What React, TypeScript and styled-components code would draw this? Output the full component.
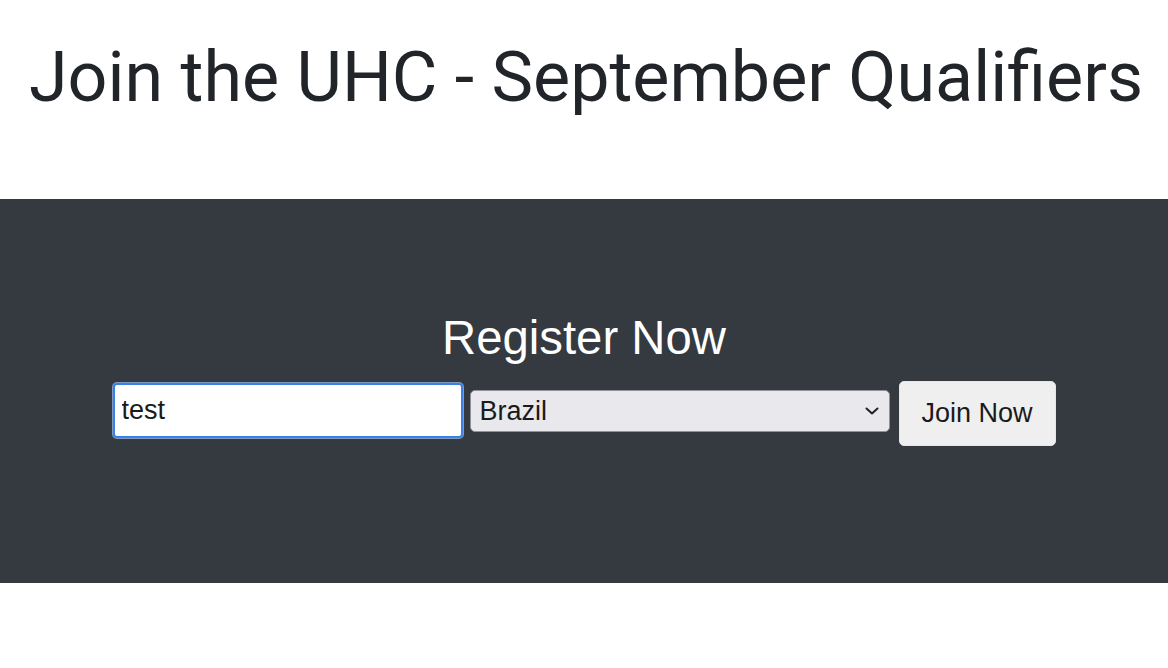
import React from "react";
import styled, { createGlobalStyle } from "styled-components";

const Global = createGlobalStyle`
  html, body { margin: 0; padding: 0; background: #fff; }
  body { font-family: Roboto, "Liberation Sans", Arial, sans-serif; color: #212529; }
`;

const Page = styled.div`
  display: flex;
  flex-direction: column;
  width: 100%;
`;

const Header = styled.header`
  height: 199px;
  display: flex;
  align-items: flex-start;
  justify-content: center;
`;

const Title = styled.h1`
  margin: 35px 0 0 4px;
  font-family: Roboto, sans-serif;
  font-weight: 400;
  font-size: 70px;
  line-height: 1.2;
  color: #212529;
  white-space: nowrap;
`;

const Band = styled.section`
  height: 384px;
  background: #343a40;
  display: flex;
  flex-direction: column;
  align-items: center;
  padding-top: 111px;
  box-sizing: border-box;
`;

const SubTitle = styled.h2`
  margin: 0;
  font-family: "Liberation Sans", Arial, sans-serif;
  font-weight: 400;
  font-size: 47.3px;
  line-height: 1.2;
  color: #fff;
`;

const Form = styled.form`
  display: flex;
  align-items: flex-start;
  margin-top: 14px;
`;

const TextInput = styled.input`
  box-sizing: border-box;
  width: 350px;
  height: 55px;
  margin-top: 2px;
  padding: 0 7px;
  font-family: "Liberation Sans", Arial, sans-serif;
  font-size: 27px;
  color: #1a1a1a;
  background: #fff;
  border: 2px solid #3a80e6;
  border-radius: 4px;
  box-shadow: 0 0 0 1px #7d9cc4;
  outline: none;
`;

const SelectWrap = styled.div`
  position: relative;
  margin: 9px 0 0 7px;
`;

const Select = styled.select`
  display: block;
  box-sizing: border-box;
  width: 420px;
  height: 42px;
  padding: 0 30px 0 9px;
  font-family: "Liberation Sans", Arial, sans-serif;
  font-size: 27px;
  color: #1a1a1a;
  background: #e9e9ed;
  border: 1px solid #8f8f9d;
  border-radius: 5px;
  appearance: none;
  -webkit-appearance: none;
  outline: none;
`;

const Chevron = styled.svg`
  position: absolute;
  right: 11px;
  top: 17px;
  width: 14px;
  height: 8px;
  pointer-events: none;
`;

const Button = styled.button`
  box-sizing: border-box;
  width: 157px;
  height: 65px;
  margin-left: 9px;
  padding: 0;
  font-family: "Liberation Sans", Arial, sans-serif;
  font-size: 27px;
  color: #1a1a1a;
  background: #efefef;
  border: 1px solid #e6e6e6;
  border-radius: 5px;
  cursor: pointer;
`;

export default function App() {
  return (
    <Page>
      <Global />
      <Header>
        <Title>Join the UHC - September Qualifiers</Title>
      </Header>
      <Band>
        <SubTitle>Register Now</SubTitle>
        <Form onSubmit={(e) => e.preventDefault()}>
          <TextInput type="text" defaultValue="test" />
          <SelectWrap>
            <Select defaultValue="Brazil">
              <option>Brazil</option>
              <option>Argentina</option>
              <option>United States</option>
            </Select>
            <Chevron viewBox="0 0 14 8">
              <path d="M1.5 1.5 L7 6.5 L12.5 1.5" fill="none" stroke="#222" strokeWidth="2" strokeLinecap="round" strokeLinejoin="round" />
            </Chevron>
          </SelectWrap>
          <Button type="submit">Join Now</Button>
        </Form>
      </Band>
    </Page>
  );
}
